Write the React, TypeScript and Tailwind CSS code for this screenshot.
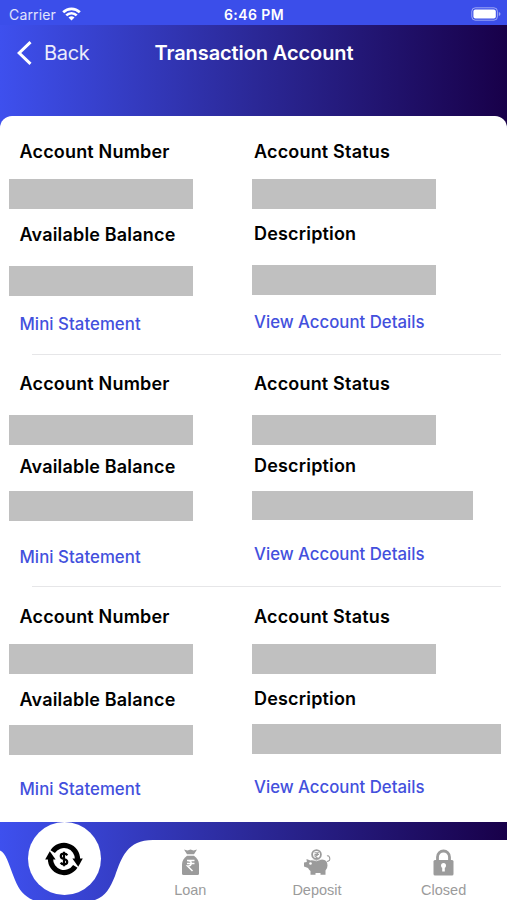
import type { ReactNode } from 'react'

interface Field {
  label: string
  bar: string
}

interface Account {
  id: number
  left: [Field, Field]
  right: [Field, Field]
}

// Bar classes hold the offset and size of each masked value
const ACCOUNTS: Account[] = [
  {
    id: 1,
    left: [
      { label: 'Account Number', bar: 'mt-[15.5px] ml-[9px] h-[30px] w-[184px]' },
      { label: 'Available Balance', bar: 'mt-[19px] ml-[9px] h-[30px] w-[184px]' },
    ],
    right: [
      { label: 'Account Status', bar: 'mt-[15.5px] ml-[0.5px] h-[30px] w-[184px]' },
      { label: 'Description', bar: 'mt-[19.5px] ml-[0.5px] h-[30px] w-[184px]' },
    ],
  },
  {
    id: 2,
    left: [
      { label: 'Account Number', bar: 'mt-[18.5px] ml-[9px] h-[30px] w-[184px]' },
      { label: 'Available Balance', bar: 'mt-[11.5px] ml-[9px] h-[30px] w-[184px]' },
    ],
    right: [
      { label: 'Account Status', bar: 'mt-[18.5px] ml-[1px] h-[30px] w-[184px]' },
      { label: 'Description', bar: 'mt-[12.5px] ml-[1px] h-[29px] w-[221px]' },
    ],
  },
  {
    id: 3,
    left: [
      { label: 'Account Number', bar: 'mt-[15px] ml-[9px] h-[30px] w-[184px]' },
      { label: 'Available Balance', bar: 'mt-[13px] ml-[9px] h-[30px] w-[184px]' },
    ],
    right: [
      { label: 'Account Status', bar: 'mt-[15px] ml-[0.5px] h-[30px] w-[184px]' },
      { label: 'Description', bar: 'mt-[13.5px] ml-[1px] h-[30px] w-[249px]' },
    ],
  },
]

function StatusBar() {
  return (
    <div className="grid h-[25px] grid-cols-3 items-center bg-[#3b4eea] pt-[3px] pr-[6px] pl-[9px] text-white">
      <div className="flex items-center gap-[6px]">
        <span className="text-[14px] tracking-[0.15px] text-white/85">Carrier</span>
        <svg width="19" height="14" viewBox="0 0 19 14" fill="none" stroke="white" strokeWidth="2.7">
          <path d="M1.2 5.2a11.8 11.8 0 0 1 16.6 0" />
          <path d="M4.3 8.4a7.4 7.4 0 0 1 10.4 0" />
          <path d="M9.5 13.6 6.5 10.6a4.3 4.3 0 0 1 6 0z" fill="white" stroke="none" />
        </svg>
      </div>
      <span className="pr-[2px] text-center text-[14px] font-semibold tracking-[0.4px]">6:46 PM</span>
      <div className="flex justify-end">
        <svg width="30" height="14" viewBox="0 0 30 14">
          <rect x="0.8" y="0.8" width="25.6" height="12.4" rx="3.5" fill="none" stroke="white" strokeOpacity="0.5" />
          <rect x="2.4" y="2.4" width="22.4" height="9.2" rx="2" fill="white" />
          <path d="M27.8 5v4q1.7-.7 1.7-2t-1.7-2z" fill="white" fillOpacity="0.5" />
        </svg>
      </div>
    </div>
  )
}

function Header() {
  return (
    <header className="grid h-[55px] grid-cols-[1fr_auto_1fr] items-center text-white">
      <button className="flex items-center gap-[12px] pl-[17px] text-[20px] tracking-[-0.3px] text-white/90">
        <svg width="15" height="24" viewBox="0 0 15 24" fill="none" stroke="white" strokeWidth="3">
          <path d="M13.5 1.2 2.2 12l11.3 10.8" />
        </svg>
        Back
      </button>
      <h1 className="pl-px text-[20px] font-semibold tracking-[-0.1px]">Transaction Account</h1>
      <span />
    </header>
  )
}

function FieldBlock({ label, bar, pad, slot }: Field & { pad: string; slot: string }) {
  return (
    <>
      <p className={`${pad} h-6 text-[18px] leading-6 font-semibold tracking-[0.18px] whitespace-nowrap`}>{label}</p>
      <div className={`${slot} flex`}>
        <div className={`${bar} shrink-0 bg-[#c0c0c0]`} />
      </div>
    </>
  )
}

function AccountCard({ account, last }: { account: Account; last: boolean }) {
  const { left, right } = account
  return (
    <section className="flex h-[232.5px] flex-col justify-between">
      <div className="flex pt-[17.5px]">
        <div className="w-[251px]">
          <FieldBlock {...left[0]} pad="pl-[19.5px]" slot="h-[59px]" />
          <FieldBlock {...left[1]} pad="pl-[19.5px]" slot="h-[65.5px]" />
          <a className="block pl-[19.5px] text-[16.8px] leading-6 font-medium tracking-[0.05px] text-[#4350dd]">Mini Statement</a>
        </div>
        <div className="flex-1">
          <FieldBlock {...right[0]} pad="pl-[3px]" slot="h-[58px]" />
          <FieldBlock {...right[1]} pad="pl-[3px]" slot="h-[64px]" />
          <a className="block pl-[3px] text-[16.8px] leading-6 font-medium text-[#4350dd]">View Account Details</a>
        </div>
      </div>
      {!last && <div className="mr-[6px] ml-[32px] h-px bg-[#e6e6e8]" />}
    </section>
  )
}

function Tab({ label, children }: { label: string; children: ReactNode }) {
  return (
    <div className="flex w-[126.7px] flex-col items-center text-[#9b9b9b]">
      <div className="flex h-[28px] items-end">{children}</div>
      <span className="mt-[4px] font-['Liberation_Sans',sans-serif] text-[14.5px] leading-[20px]">{label}</span>
    </div>
  )
}

function MoneyBag() {
  return (
    <svg width="19" height="27" viewBox="0 0 19 27" fill="currentColor">
      <path d="M3 0.5 6.5 1.5 9.5 0.5l3 1L16 0.5l-3 4.8H6z" />
      <path d="M6 6.7h7c2.8 2.2 5 5 5 8.7V24.500q0 1.500-1.500 1.500h-14q-1.500 0-1.500-1.500v-9.100C1 11.700 3.200 8.900 6 6.700z" />
      <path d="M6 11.500h7.500M6 14.500h7.500M6.500 11.500c5 0 5 5.500 0 5.500l5 5" fill="none" stroke="white" strokeWidth="1.500" />
    </svg>
  )
}

function PiggyBank() {
  return (
    <svg width="28" height="27" viewBox="0 0 28 27" fill="currentColor">
      <path d="M3.500 10 7.500 11.500q2.500-1 5.500-1h6q5.500 0 5.500 6 0 3-2 5v4.200h-5v-1.700h-5v1.700H7.500v-3.700q-1.500-1-2.500-3L1 17.500V13.500l2.800-.5z" />
      <path d="M24 12.500q3.500-.5 2.700-3.500t-2.700-2" fill="none" stroke="currentColor" strokeWidth="1.100" />
      <circle cx="13.500" cy="5.500" r="4.400" fill="white" stroke="currentColor" strokeWidth="1.800" />
      <path d="M11.500 3.700h4.500M11.500 5.500h4.500M12 3.700c3.500 0 3.500 3.300 0 3.300l2.700 2.300" fill="none" stroke="currentColor" strokeWidth="1.100" />
      <circle cx="7.500" cy="14.500" r="1.300" fill="white" />
      <path d="M8.500 10.800q5 2.300 10-.6" fill="none" stroke="white" strokeWidth="0.700" />
    </svg>
  )
}

function Padlock() {
  return (
    <svg width="21" height="27" viewBox="0 0 21 27" fill="currentColor">
      <path d="M4.500 12V8a6 6 0 0 1 12 0v4" fill="none" stroke="currentColor" strokeWidth="2.800" />
      <rect x="0.500" y="11" width="20" height="15.500" rx="1.500" />
      <circle cx="10.500" cy="16.500" r="2.500" fill="white" />
      <path d="M9.200 17h2.600v5.500H9.200z" fill="white" />
    </svg>
  )
}

function ActiveTab() {
  return (
    <div className="flex size-[73px] items-center justify-center rounded-full bg-white text-black">
      <svg width="38" height="36" viewBox="0 0 38 36" fill="none" stroke="currentColor">
        <path d="M7.700 10.600A13.500 13.500 0 0 1 32.500 18.500" strokeWidth="5.200" />
        <path d="M30.300 25.400A13.500 13.500 0 0 1 5.500 17.500" strokeWidth="5.200" />
        <path d="M27.400 17.500h10.400l-4.600 8.300z" fill="currentColor" stroke="none" />
        <path d="M10.600 18.500H.2l4.600-8.300z" fill="currentColor" stroke="none" />
        <path d="M22.300 14.400q-1-1.700-3.300-1.700c-4.300 0-4.300 4.500 0 5.300s4.300 5.300 0 5.300q-2.300 0-3.300-1.700M19 10.800v14.400" strokeWidth="2.200" />
      </svg>
    </div>
  )
}

function TabBar() {
  return (
    <nav className="relative h-[78px] bg-linear-to-r/srgb from-[#3e50ee] via-[#2b2897] to-[#180049]">
      {/* white surface with the dip around the active tab */}
      <svg className="absolute inset-0" width="507" height="78" viewBox="0 0 507 78" fill="white">
        <path d="M0 28.500C6 31 8 40 15 58C19 68 24 74 33 78H0z" />
        <path d="M95 78C106 74 110 66 115 54C122 35 127 18 153 18H507V78z" />
      </svg>
      <div className="relative flex">
        <div className="flex w-[127px] justify-center pl-[1.500px]">
          <ActiveTab />
        </div>
        <div className="flex pt-[26px]">
          <Tab label="Loan"><MoneyBag /></Tab>
          <Tab label="Deposit"><PiggyBank /></Tab>
          <Tab label="Closed"><Padlock /></Tab>
        </div>
      </div>
    </nav>
  )
}

export default function App() {
  return (
    <div className="flex h-[900px] w-[507px] flex-col overflow-hidden bg-white font-['Inter','Liberation_Sans',sans-serif] text-black">
      <StatusBar />
      <div className="bg-linear-to-r/srgb from-[#3e50ee] via-[#2b2897] to-[#180049]">
        <Header />
        <div className="mt-[35.5px] h-[13.5px] rounded-t-[12px] bg-white" />
      </div>
      <main className="-mt-[7px] h-[700px] shrink-0">
        {ACCOUNTS.map((a, i) => (
          <AccountCard key={a.id} account={a} last={i === ACCOUNTS.length - 1} />
        ))}
      </main>
      <TabBar />
    </div>
  )
}
